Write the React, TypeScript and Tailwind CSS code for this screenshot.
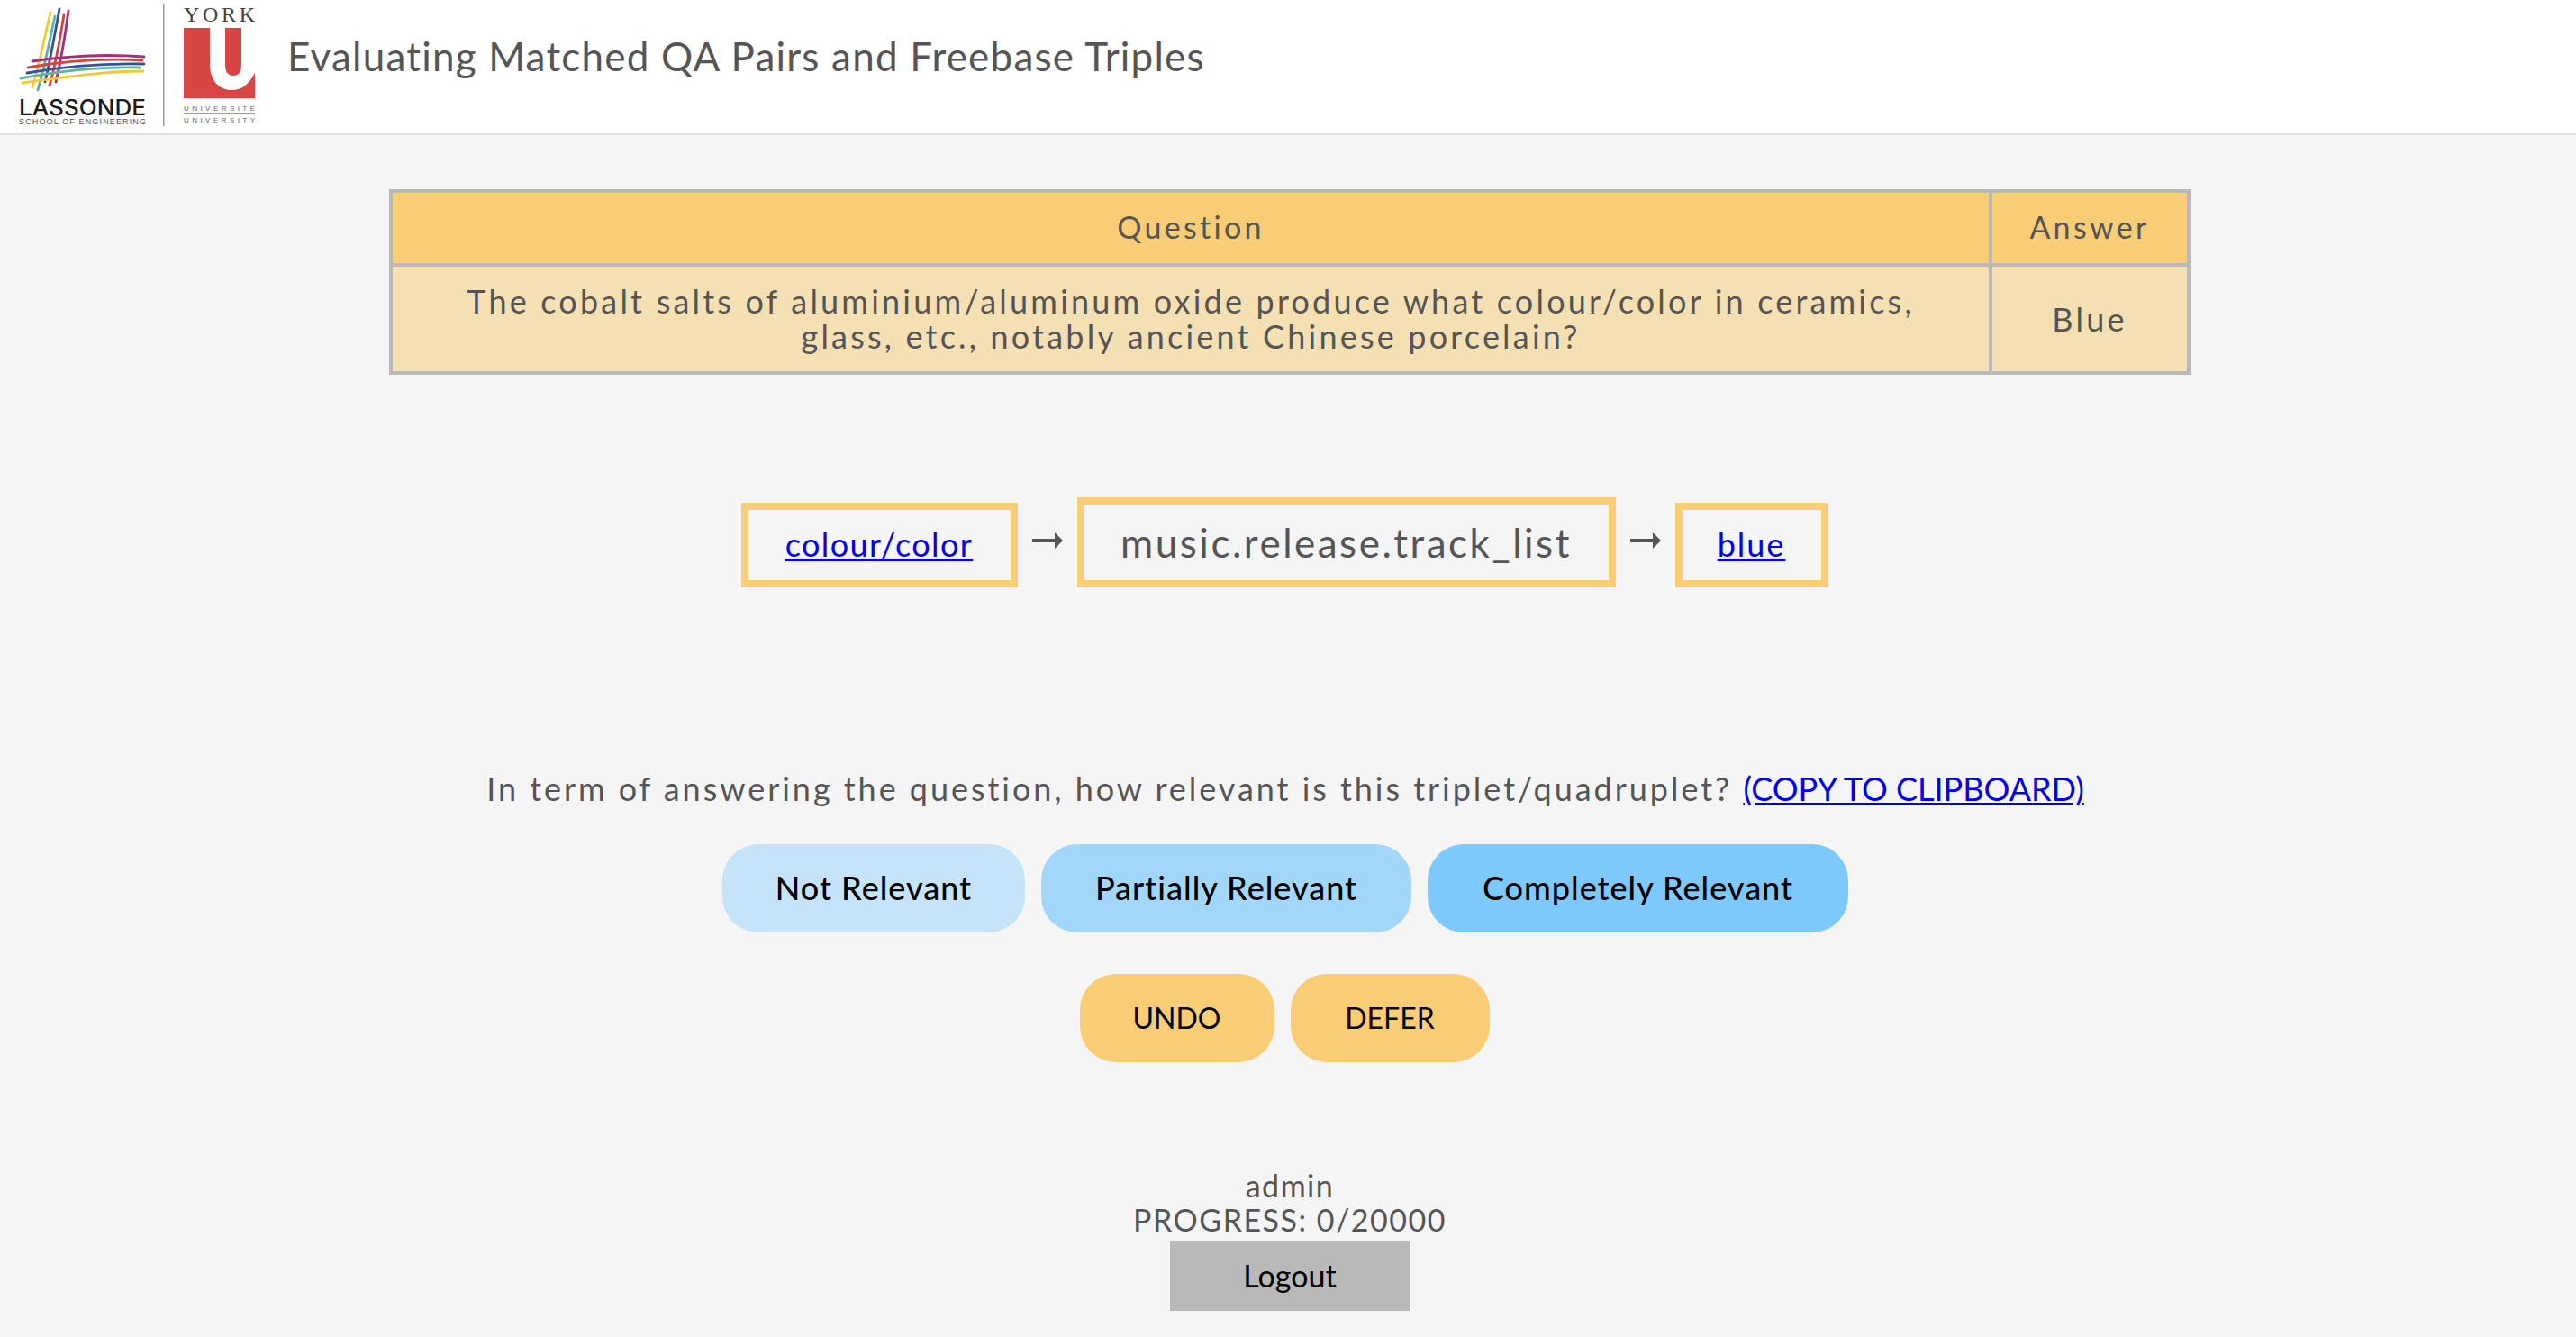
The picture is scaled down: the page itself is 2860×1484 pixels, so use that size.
const font = "font-['Lato','Noto_Sans',sans-serif]";

function Logos() {
    return (
        <svg width="300" height="148" viewBox="0 0 300 148" className="shrink-0">
            {/* Lassonde weave */}
            <g fill="none" strokeWidth="2.8" strokeLinecap="round">
                <path d="M56 14 C48 48 44 70 36 97" stroke="#f2c933"/>
                <path d="M61 18 C54 50 50 72 42 100" stroke="#5fb595"/>
                <path d="M66 10 C60 42 56 66 50 91" stroke="#34509f"/>
                <path d="M71 16 C66 48 62 70 55 95" stroke="#d8433f"/>
                <path d="M76 12 C72 42 68 66 62 91" stroke="#a2307c"/>
                <path d="M36 68 C75 62 120 60 160 63" stroke="#a2307c"/>
                <path d="M31 75 C75 67 120 65 158 67" stroke="#d8433f"/>
                <path d="M30 81 C75 73 120 70 160 71" stroke="#34509f"/>
                <path d="M23 87 C70 78 115 74 155 75" stroke="#5fb595"/>
                <path d="M25 92 C70 86 115 79 159 79" stroke="#f2c933"/>
            </g>
            <text x="21" y="128" fontFamily="Inter, sans-serif" fontSize="24" fontWeight="500" fill="#1a1a1a" textLength="141" lengthAdjust="spacingAndGlyphs">LASSONDE</text>
            <text x="21" y="138" fontFamily="Liberation Sans, sans-serif" fontSize="9" fill="#555" textLength="141">SCHOOL OF ENGINEERING</text>
            <rect x="181" y="4" width="1.5" height="136" fill="#999"/>
            {/* York U */}
            <text x="204" y="24" fontFamily="Liberation Serif, serif" fontSize="24" fill="#444" textLength="79">YORK</text>
            <rect x="204" y="31" width="79" height="78" fill="#d74545"/>
            <path d="M233 31 H283 V81 C276 94 268 100 258 100 C243 100 233 90 233 70 Z" fill="#fff"/>
            <path d="M250 31 H268 V72 Q268 84 259 84 Q250 84 250 72 Z" fill="#d74545"/>
            <text x="204" y="123" fontFamily="Liberation Sans, sans-serif" fontSize="8" fill="#666" textLength="79">UNIVERSITÉ</text>
            <rect x="204" y="125" width="79" height="1" fill="#d98080"/>
            <text x="204" y="136" fontFamily="Liberation Sans, sans-serif" fontSize="8" fill="#666" textLength="79">UNIVERSITY</text>
        </svg>
    );
}

function Arrow() {
    return (
        <svg width="34" height="20" viewBox="0 0 34 20" className="shrink-0 mb-[42px]">
            <path d="M0 10 H26" stroke="#555" strokeWidth="4"/>
            <path d="M25 1 L34 10 L25 19 Z" fill="#555"/>
        </svg>
    );
}

export default function App() {
    return (
        <div className={`${font} w-[2860px] h-[1484px] bg-[#f5f5f5] text-[#555] overflow-hidden flex flex-col`}>
            {/* Header */}
            <header className="h-[150px] shrink-0 bg-white border-b-2 border-[#dfdfdf] flex items-center">
                <Logos/>
                <h1 className="ml-[19px] mb-[24px] text-[44px] font-normal tracking-[1.2px] text-[#555]">
                    Evaluating Matched QA Pairs and Freebase Triples
                </h1>
            </header>

            <main className="flex flex-col items-center pt-[60px] pl-[4px]">
                {/* Question table */}
                <table className="w-[2000px] border-collapse border-4 border-[#b9b9b9] text-center">
                    <thead className="text-[34px] tracking-[3.3px]">
                        <tr className="bg-[#f9cc76] h-[82px]">
                            <th className="font-normal border-4 border-[#b9b9b9] pb-[3px]">Question</th>
                            <th className="font-normal border-4 border-[#b9b9b9] pb-[3px] w-[220px]">Answer</th>
                        </tr>
                    </thead>
                    <tbody className="text-[36px] tracking-[3.2px]">
                        <tr className="bg-[#f5e0b4] h-[120px]">
                            <td className="border-4 border-[#b9b9b9] px-[30px] leading-[39px]">
                                The cobalt salts of aluminium/aluminum oxide produce what colour/color in ceramics,<br/>
                                glass, etc., notably ancient Chinese porcelain?
                            </td>
                            <td className="border-4 border-[#b9b9b9]">Blue</td>
                        </tr>
                    </tbody>
                </table>

                {/* Triple */}
                <div className="mt-[136px] mr-[12px] flex items-end gap-[16px]">
                    <div className="w-[307px] h-[94px] border-8 border-[#f9cc76] flex items-center justify-center pb-[3px] text-[36px] tracking-[1.4px]">
                        <a href="#" className="text-[#0000ee] underline">colour/color</a>
                    </div>
                    <Arrow/>
                    <div className="w-[598px] h-[100px] border-8 border-[#f9cc76] flex items-center justify-center text-[44px] tracking-[2.5px]">
                        music.release.track_list
                    </div>
                    <Arrow/>
                    <div className="w-[170px] h-[94px] border-8 border-[#f9cc76] flex items-center justify-center pb-[3px] text-[36px] tracking-[2px]">
                        <a href="#" className="text-[#0000ee] underline">blue</a>
                    </div>
                </div>

                <p className="mt-[203px] mr-[10px] text-[36px] leading-[40px] tracking-[2.96px]">
                    In term of answering the question, how relevant is this triplet/quadruplet?{' '}
                    <a href="#" className="text-[#0000ee] underline tracking-normal">(COPY TO CLIPBOARD)</a>
                </p>

                {/* Rating buttons */}
                <div className="mt-[42px] mr-[10px] flex gap-[18px] text-[36px] tracking-[1px] font-medium text-black">
                    <button className="w-[336px] h-[98px] pb-[2px] rounded-[40px] bg-[#c5e4fa]">Not Relevant</button>
                    <button className="w-[411px] h-[98px] pb-[2px] rounded-[40px] bg-[#a3d7fa]">Partially Relevant</button>
                    <button className="w-[467px] h-[98px] pb-[2px] rounded-[40px] bg-[#7dc9fc]">Completely Relevant</button>
                </div>

                <div className="mt-[46px] mr-[12px] flex gap-[18px] text-[32px] text-black">
                    <button className="w-[216px] h-[98px] rounded-[40px] bg-[#f9cc76]">UNDO</button>
                    <button className="w-[221px] h-[98px] rounded-[40px] bg-[#f9cc76]">DEFER</button>
                </div>

                {/* Footer */}
                <div className="mt-[118px] flex flex-col items-center text-[34px] leading-[38px] tracking-[1.5px]">
                    <div>admin</div>
                    <div>PROGRESS: 0/20000</div>
                    <button className="mt-[4px] w-[266px] h-[78px] bg-[#b9b9b9] text-black tracking-normal">Logout</button>
                </div>
            </main>
        </div>
    );
}
